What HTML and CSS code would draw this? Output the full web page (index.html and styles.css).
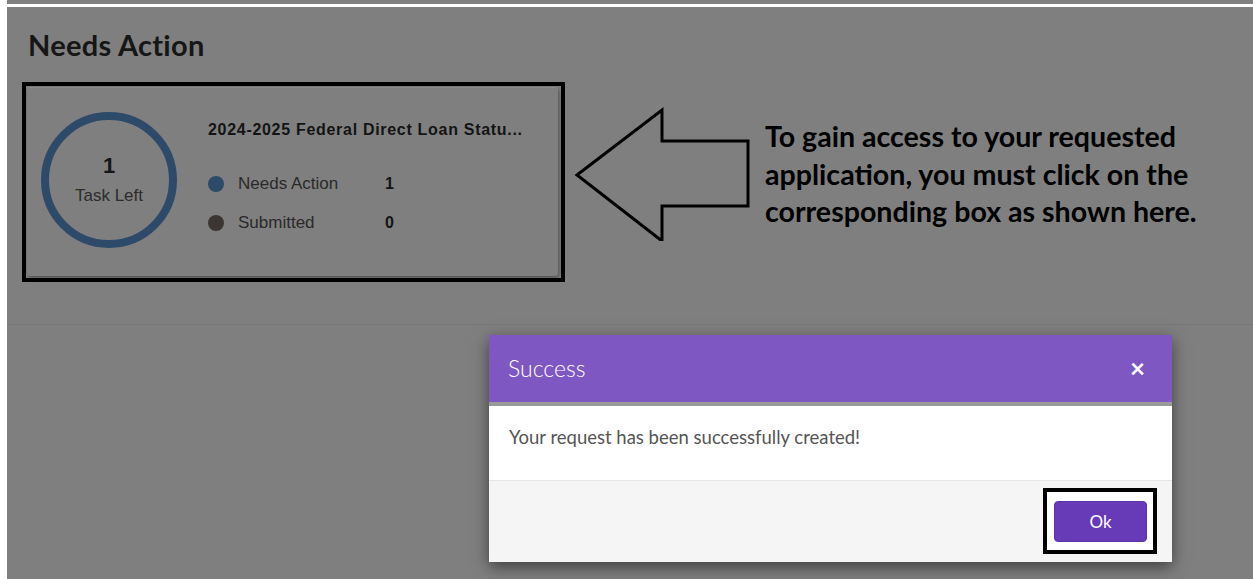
FILE: index.html
```html
<!DOCTYPE html>
<html lang="en">
<head>
<meta charset="utf-8">
<title>Needs Action</title>
<link rel="stylesheet" href="styles.css">
</head>
<body>
<div class="frame">
  <div class="topbar"></div>
  <main class="screen">
    <section class="section">
      <h2 class="section-title">Needs Action</h2>
      <div class="row">
        <div class="highlight">
          <div class="task-card">
            <div class="ring">
              <span class="ring-count">1</span>
              <span class="ring-label">Task Left</span>
            </div>
            <div class="task-info">
              <div class="task-title">2024-2025 Federal Direct Loan Statu...</div>
              <ul class="legend">
                <li class="legend-item"><span class="dot dot-action"></span><span class="legend-label">Needs Action</span><span class="legend-value">1</span></li>
                <li class="legend-item"><span class="dot dot-submitted"></span><span class="legend-label">Submitted</span><span class="legend-value">0</span></li>
              </ul>
            </div>
          </div>
        </div>
        <svg class="pointer" width="190" height="136" viewBox="0 0 190 136" aria-hidden="true">
          <polygon points="12,70 97,5 97,36 183,36 183,101 97,101 97,136" fill="none" stroke="#000" stroke-width="3" stroke-linejoin="miter"/>
        </svg>
        <p class="hint">To gain access to your requested application, you must click on the corresponding box as shown here.</p>
      </div>
    </section>

    <div class="modal" role="dialog">
      <div class="modal-header">
        <span class="modal-title">Success</span>
        <span class="modal-close">&times;</span>
      </div>
      <div class="modal-body">Your request has been successfully created!</div>
      <div class="modal-footer">
        <div class="ok-frame"><button class="btn-ok">Ok</button></div>
      </div>
    </div>
  </main>
</div>
</body>
</html>
```
FILE: styles.css
```css
* { box-sizing: border-box; }

html, body {
  margin: 0;
  height: 100%;
  background: #fff;
  font-family: Lato, "Open Sans", sans-serif;
  overflow: hidden;
}

.frame {
  margin-left: 7px;
  height: 579px;
  display: flex;
  flex-direction: column;
}

.topbar {
  height: 4px;
  background: #7f7f7f;
  margin-bottom: 3px;
}

.screen {
  flex: 1;
  position: relative;
  background: #7f7f7f;
}

.section {
  height: 318px;
  padding: 22px 0 0 15px;
  border-bottom: 1px solid #777;
}

.section-title {
  margin: 0 0 21px 6px;
  font-size: 29px;
  line-height: 32px;
  font-weight: 700;
  letter-spacing: 0.3px;
  color: #161616;
}

.row {
  display: flex;
  align-items: flex-start;
}

/* black frame around the task card */
.highlight {
  width: 543px;
  height: 200px;
  border: 4px solid #000;
  padding: 1px 3px 2px 1px;
}

.task-card {
  width: 531px;
  height: 189px;
  border-radius: 3px;
  background: #7f7f7f;
  box-shadow: 1px 2px 4px rgba(0, 0, 0, 0.4);
  border-top: 1px solid #8a8a8a;
  display: flex;
  align-items: flex-start;
  padding: 24px 0 0 14px;
}

.ring {
  width: 136px;
  height: 136px;
  border-radius: 50%;
  border: 8px solid #2d4b68;
  display: flex;
  flex-direction: column;
  align-items: center;
  justify-content: center;
  font-family: "Liberation Sans", Arial, sans-serif;
  padding-top: 1px;
}

.ring-count {
  font-size: 22px;
  font-weight: 700;
  color: #161616;
  line-height: 24px;
}

.ring-label {
  font-size: 17px;
  color: #2c2c2c;
  line-height: 22px;
  margin-top: 7px;
}

.task-info {
  margin-left: 31px;
  padding-top: 9px;
  font-family: "Liberation Sans", Arial, sans-serif;
}

.task-title {
  font-size: 16px;
  line-height: 18px;
  font-weight: 700;
  letter-spacing: 0.7px;
  color: #141414;
}

.legend {
  list-style: none;
  margin: 33px 0 0;
  padding: 0;
  display: flex;
  flex-direction: column;
  gap: 15px;
}

.legend-item {
  display: flex;
  align-items: center;
  height: 24px;
}

.dot {
  width: 16px;
  height: 16px;
  border-radius: 50%;
  margin-right: 14px;
}

.dot-action { background: #2d4b68; }
.dot-submitted { background: #3b3633; }

.legend-label {
  width: 147px;
  font-size: 17px;
  color: #2a2a2a;
}

.legend-value {
  font-size: 16px;
  font-weight: 700;
  color: #141414;
}

.pointer {
  margin: 23px 0 0 0;
  flex: none;
}

.hint {
  margin: 36px 0 0 10px;
  width: 470px;
  font-size: 28.6px;
  line-height: 37.5px;
  font-weight: 700;
  color: #000;
}

/* dialog */
.modal {
  position: absolute;
  left: 482px;
  top: 328px;
  width: 683px;
  background: #fff;
  box-shadow: 0 5px 15px rgba(0, 0, 0, 0.5);
}

.modal-header {
  height: 71px;
  background: #7e57c2;
  border-bottom: 4px solid #9a9a9a;
  display: flex;
  align-items: center;
  justify-content: space-between;
  padding: 0 27px 2px 19px;
  color: #fff;
}

.modal-title {
  font-size: 23px;
  font-weight: 300;
}

.modal-close {
  font-size: 26px;
  font-weight: 700;
  line-height: 1;
}

.modal-body {
  height: 75px;
  padding: 20px;
  font-size: 18.5px;
  line-height: 22px;
  color: #555;
  border-bottom: 1px solid #e5e5e5;
}

.modal-footer {
  height: 81px;
  background: #f5f5f5;
  display: flex;
  justify-content: flex-end;
  padding: 7px 15px 8px;
}

.ok-frame {
  border: 4px solid #000;
  background: #fff;
  padding: 9px 6px 7px 7px;
}

.btn-ok {
  width: 93px;
  height: 41px;
  border: 1px solid #5e35a8;
  border-radius: 4px;
  background: #673ab7;
  color: #fff;
  font-family: Lato, sans-serif;
  font-size: 17px;
}
```
